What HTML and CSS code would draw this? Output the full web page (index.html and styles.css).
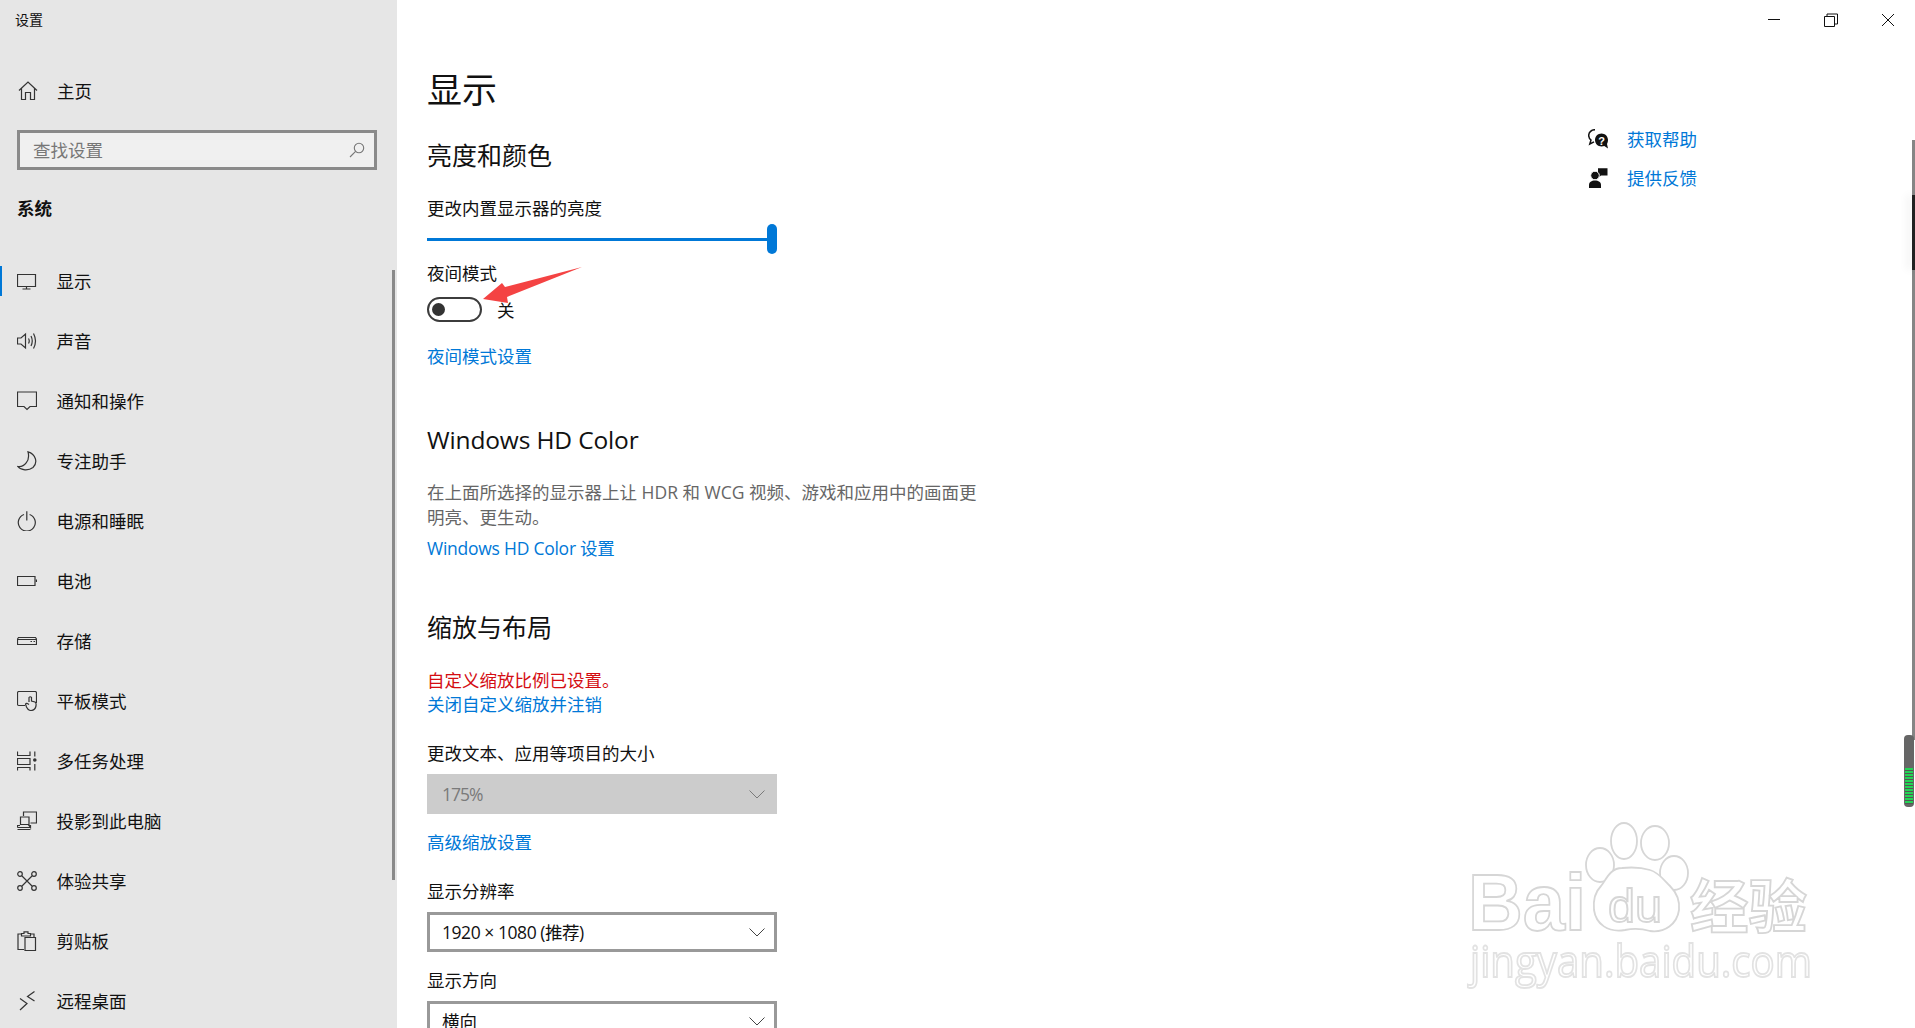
FILE: index.html
```html
<!DOCTYPE html>
<html lang="zh-CN">
<head>
    <meta charset="UTF-8">
    <title>设置</title>
    <link rel="stylesheet" href="styles.css">
</head>
<body>
    <div class="window">
        <!-- Sidebar -->
        <aside class="sidebar">
            <div class="app-title">设置</div>
            <div class="home-row">
                <svg class="icon" viewBox="0 0 20 20"><path d="M1 9.500 10 1l9 8.500M3.500 7.500V18.500H7.500V11.500H12.500V18.500H16.500V7.500"/></svg>
                <span>主页</span>
            </div>
            <div class="search-box">
                <span>查找设置</span>
                <svg class="search-icon" viewBox="0 0 16 16"><circle cx="10" cy="6" r="4.700"/><path d="M6.600 9.400 1 15"/></svg>
            </div>
            <div class="group-title">系统</div>
            <nav class="nav-list">
                <div class="nav-item active">
                    <svg class="icon" viewBox="0 0 20 20"><path d="M.5 3.500H18.500V15.500H.5zM9.500 15.500V18M5.500 18H13.500"/></svg>
                    <span>显示</span>
                </div>
                <div class="nav-item">
                    <svg class="icon" viewBox="0 0 20 20"><path d="M.5 7H4L8.500 3V17L4 13H.5zM11.500 7.500Q13 10 11.500 12.500M14 5Q16.500 10 14 15M16.500 2.500Q20.500 10 16.500 17.500"/></svg>
                    <span>声音</span>
                </div>
                <div class="nav-item">
                    <svg class="icon" viewBox="0 0 20 20"><path d="M.5 1H19.500V15.500H13L10 18.500 7 15.500H.5z"/></svg>
                    <span>通知和操作</span>
                </div>
                <div class="nav-item">
                    <svg class="icon" viewBox="0 0 20 20"><path d="M11 .8C19 3 21 12 16 16.500 11.500 20 4 19.500.8 15.500 7 16.500 13.500 10 11 .8z"/></svg>
                    <span>专注助手</span>
                </div>
                <div class="nav-item">
                    <svg class="icon" viewBox="0 0 20 20"><path d="M7 3.500A8.500 8.500 0 1 0 12.600 3.500M9.800 .2V9.500"/></svg>
                    <span>电源和睡眠</span>
                </div>
                <div class="nav-item">
                    <svg class="icon" viewBox="0 0 20 20"><path d="M.5 5.500H18V14.500H.5zM19.500 8.500V11"/></svg>
                    <span>电池</span>
                </div>
                <div class="nav-item">
                    <svg class="icon" viewBox="0 0 20 20"><path d="M1.500 6.500H18.500L19.500 8V13.500H.5V8zM.5 8.500H19.500M13.500 10.500H15M16.500 10.500H18"/></svg>
                    <span>存储</span>
                </div>
                <div class="nav-item">
                    <svg class="icon" viewBox="0 0 20 20"><path d="M8 14.500H2Q.5 14.500.5 13V2Q.5.5 2 .5H18Q19.500.5 19.500 2V12M12 11V6.500Q13.200 5 14.500 6.500V10L18 11Q19.500 12 19 15 18 19.500 14 19.500 11 19.500 9.500 16L8.500 13Q9.500 11.500 12 13.500"/></svg>
                    <span>平板模式</span>
                </div>
                <div class="nav-item">
                    <svg class="icon" viewBox="0 0 20 20"><path d="M.5 .5V4.500H13V.5M.5 7.500H13V13.500H.5zM.5 19.500V16.500H13V19.500M17.800 .5V5.500M17.800 13V19.500"/><circle class="solid" cx="17.800" cy="9" r="1.800"/></svg>
                    <span>多任务处理</span>
                </div>
                <div class="nav-item">
                    <svg class="icon" viewBox="0 0 20 20"><path d="M6.500 5V1H19.500V12H13.500M3.500 6H12V13.500H3.500zM.5 16.500V14.500H3M12 14.500H13.500V16.500zM.5 16.500H13.500M.5 18.500H13.500"/></svg>
                    <span>投影到此电脑</span>
                </div>
                <div class="nav-item">
                    <svg class="icon" viewBox="0 0 20 20"><circle cx="3" cy="3" r="2.300"/><circle cx="17" cy="3" r="2.300"/><circle cx="3" cy="17" r="2.300"/><circle cx="17" cy="17" r="2.300"/><path d="M5 5 15 15M15 5 5 15"/></svg>
                    <span>体验共享</span>
                </div>
                <div class="nav-item">
                    <svg class="icon" viewBox="0 0 20 20"><path d="M7 18.500H1V3H5M13 3H17V6M4.500 4.500V2.500H7V.8H11V2.500H13.500V5H4.500zM8 6.500H18.500V19.500H8z"/></svg>
                    <span>剪贴板</span>
                </div>
                <div class="nav-item">
                    <svg class="icon" viewBox="0 0 20 20"><path d="M3 7.500 10 12.500 3 19M17.500 .5 10.500 5.500 17.500 10"/></svg>
                    <span>远程桌面</span>
                </div>
            </nav>
            <div class="side-scroll"></div>
        </aside>

        <!-- Main area -->
        <main class="main">
            <div class="title-bar">
                <div class="win-btn"><svg viewBox="0 0 14 14"><path d="M1 6.500H13"/></svg></div>
                <div class="win-btn"><svg viewBox="0 0 14 14"><path d="M.5 3.500H10.500V13.500H.5zM3 3.500V1H13.500V11H10.500"/></svg></div>
                <div class="win-btn"><svg viewBox="0 0 14 14"><path d="M1 1 13 13M13 1 1 13"/></svg></div>
            </div>
            <div class="main-body">
                <section class="content">
                    <h1>显示</h1>
                    <h2 class="h-brightness">亮度和颜色</h2>
                    <div class="label l-brightness">更改内置显示器的亮度</div>
                    <div class="slider"><div class="slider-thumb"></div></div>
                    <div class="label l-night">夜间模式</div>
                    <div class="toggle-row">
                        <div class="toggle"><div class="toggle-knob"></div></div>
                        <span>关</span>
                    </div>
                    <a class="link l-nightlink">夜间模式设置</a>

                    <h2 class="h-hd">Windows HD Color</h2>
                    <p class="desc">在上面所选择的显示器上让 HDR 和 WCG 视频、游戏和应用中的画面更明亮、更生动。</p>
                    <a class="link l-hdlink">Windows HD Color 设置</a>

                    <h2 class="h-scale">缩放与布局</h2>
                    <div class="label warn">自定义缩放比例已设置。</div>
                    <a class="link l-off">关闭自定义缩放并注销</a>
                    <div class="label l-size">更改文本、应用等项目的大小</div>
                    <div class="select disabled">
                        <span>175%</span>
                        <svg class="chevron" viewBox="0 0 16 9"><path d="M.5 .5 8 8 15.500 .5"/></svg>
                    </div>
                    <a class="link l-adv">高级缩放设置</a>
                    <div class="label l-res">显示分辨率</div>
                    <div class="select s-res">
                        <span>1920 × 1080 (推荐)</span>
                        <svg class="chevron" viewBox="0 0 16 9"><path d="M.5 .5 8 8 15.500 .5"/></svg>
                    </div>
                    <div class="label l-orient">显示方向</div>
                    <div class="select s-orient">
                        <span>横向</span>
                        <svg class="chevron" viewBox="0 0 16 9"><path d="M.5 .5 8 8 15.500 .5"/></svg>
                    </div>
                </section>
                <section class="help">
                    <div class="help-row">
                        <svg class="help-icon" viewBox="0 0 20 20">
                            <path class="outline" d="M7 .7C3.500 .7.7 3.200.7 6.500.7 8.500 1.700 10 3 11L1.800 15 6 12.800"/>
                            <path class="fill" d="M13.500 4.500C10 4.500 7 7.300 7 11S10 17.500 13.500 17.500C14.500 17.500 15.500 17.300 16.300 17L20 19.500 19 15C19.700 13.800 20 12.500 20 11 20 7.300 17 4.500 13.500 4.500z"/>
                            <text class="help-q" x="13.500" y="15.500">?</text>
                        </svg>
                        <a class="link">获取帮助</a>
                    </div>
                    <div class="help-row">
                        <svg class="help-icon" viewBox="0 0 20 20">
                            <path class="fill" d="M10 .2H19.500V7.500H13L10.500 9.500V5.500H10z"/>
                            <circle class="fill head" cx="7" cy="7.500" r="4.300"/>
                            <path class="fill" d="M1 20V17C1 14 3.500 12.500 7 12.500S13 14 13 17V20z"/>
                        </svg>
                        <a class="link">提供反馈</a>
                    </div>
                </section>
            </div>
        </main>
    </div>

    <!-- Annotation arrow pasted on the screenshot -->
    <svg class="arrow" viewBox="0 0 110 44"><polygon points="1,38 20,22 23,26 100,6 25,36 26,42"/></svg>

    <!-- Watermark -->
    <svg class="watermark" viewBox="0 0 380 190">
        <text class="wm-big" x="8" y="110" textLength="118" lengthAdjust="spacingAndGlyphs">Bai</text>
        <ellipse cx="140" cy="45" rx="14" ry="17"/>
        <ellipse cx="164" cy="21" rx="13" ry="18"/>
        <ellipse cx="195" cy="23" rx="14" ry="17"/>
        <ellipse cx="214" cy="53" rx="14" ry="17"/>
        <path d="M162 48C150 48 146 60 141 66 135 72 133 80 134 90 136 104 148 113 165 110 174 108 180 108 190 111 205 113 217 104 219 90 220 80 216 72 210 66 204 60 198 52 190 50 180 47 172 47 162 48z"/>
        <text class="wm-du" x="148" y="102" textLength="54" lengthAdjust="spacingAndGlyphs">du</text>
        <text class="wm-cn" x="230" y="108" textLength="117" lengthAdjust="spacingAndGlyphs">经验</text>
        <text class="wm-url" x="10" y="157" textLength="342" lengthAdjust="spacingAndGlyphs">jingyan.baidu.com</text>
    </svg>

    <!-- Right edge scrollbar and desktop widget -->
    <div class="page-scroll"><div class="page-scroll-dark"></div></div>
    <div class="widget"><div class="widget-bars"></div></div>
</body>
</html>
```

FILE: styles.css
```css
* {
    box-sizing: border-box;
}

html, body {
    margin: 0;
    padding: 0;
    height: 1028px;
    overflow: hidden;
}

body {
    position: relative;
    font-family: "Open Sans", "Noto Sans CJK SC", sans-serif;
    font-size: 17.5px;
    line-height: 24px;
    color: #111;
    background-color: #fff;
}

.window {
    display: flex;
    height: 1028px;
}

/* Sidebar */
.sidebar {
    position: relative;
    flex: 0 0 397px;
    background-color: #e6e6e6;
    overflow: hidden;
}

.app-title {
    height: 40px;
    padding-left: 15px;
    font-size: 14px;
    line-height: 40px;
}

.home-row {
    display: flex;
    align-items: center;
    height: 30px;
    margin-top: 36px;
    padding-left: 18px;
}

.home-row span {
    margin-left: 19px;
}

.icon {
    flex: 0 0 20px;
    width: 20px;
    height: 20px;
    fill: none;
    stroke: #333;
    stroke-width: 1.2;
}

.icon .solid {
    fill: #333;
    stroke: none;
}

.search-box {
    display: flex;
    align-items: center;
    justify-content: space-between;
    width: 360px;
    height: 40px;
    margin: 24px 0 0 17px;
    padding: 0 9px 0 13px;
    border: 3px solid #8a8a8a;
    background-color: #f0f0f0;
    color: #777;
}

.search-icon {
    width: 16px;
    height: 16px;
    fill: none;
    stroke: #777;
    stroke-width: 1.1;
}

.group-title {
    margin: 26px 0 0 17px;
    font-weight: 700;
}

.nav-list {
    margin-top: 31px;
}

.nav-item {
    display: flex;
    align-items: center;
    height: 60px;
    padding-left: 17px;
}

.nav-item span {
    margin-left: 19.5px;
}

.nav-item.active {
    position: relative;
}

.nav-item.active::before {
    content: "";
    position: absolute;
    left: 0;
    top: 15px;
    width: 2px;
    height: 30px;
    background-color: #0078d7;
}

.side-scroll {
    position: absolute;
    left: 392px;
    top: 270px;
    width: 3px;
    height: 610px;
    background-color: #8a8a8a;
}

/* Main area */
.main {
    flex: 1;
    display: flex;
    flex-direction: column;
    overflow: hidden;
}

.title-bar {
    display: flex;
    justify-content: flex-end;
    height: 40px;
}

.win-btn {
    display: flex;
    align-items: center;
    justify-content: center;
    width: 57px;
    height: 40px;
}

.win-btn svg {
    width: 14px;
    height: 14px;
    margin-left: 2px;
    fill: none;
    stroke: #111;
    stroke-width: 1;
}

.main-body {
    flex: 1;
    display: flex;
    min-height: 0;
}

.content {
    flex: 1;
    padding-left: 30px;
}

h1 {
    margin: 25px 0 0;
    font-size: 35px;
    font-weight: 400;
    line-height: 50px;
}

h2 {
    font-size: 25px;
    font-weight: 400;
    line-height: 34px;
    margin: 0;
}

.label, .link {
    display: block;
    height: 24px;
}

.link {
    color: #0078d7;
}

.h-brightness { margin-top: 23px; }
.l-brightness { margin-top: 24px; }
.l-night { margin-top: 7px; }
.l-nightlink { margin-top: 22px; }
.h-hd { margin-top: 55px; font-size: 24.5px; letter-spacing: -0.15px; }
.l-hdlink { margin-top: 6px; letter-spacing: -0.25px; }
.h-scale { margin-top: 50px; }
.warn { margin-top: 24px; color: #d40d12; }
.l-off { margin-top: 0; }
.l-size { margin-top: 25px; }
.l-adv { margin-top: 16px; }
.l-res { margin-top: 25px; }
.s-res { margin-top: 7px; letter-spacing: -0.45px; }
.l-orient { margin-top: 16px; }
.s-orient { margin-top: 9px; }

.slider {
    position: relative;
    width: 350px;
    height: 30px;
    margin-top: 4px;
}

.slider::before {
    content: "";
    position: absolute;
    left: 0;
    top: 14px;
    width: 345px;
    height: 3px;
    background-color: #0078d7;
}

.slider-thumb {
    position: absolute;
    right: 0;
    top: 0;
    width: 10px;
    height: 30px;
    border-radius: 5px;
    background-color: #0078d7;
}

.toggle-row {
    display: flex;
    align-items: center;
    height: 25px;
    margin-top: 12px;
}

.toggle-row span {
    margin-left: 15px;
}

.toggle {
    display: flex;
    align-items: center;
    width: 55px;
    height: 25px;
    padding-left: 3px;
    border: 2.5px solid #3c3c3c;
    border-radius: 13px;
}

.toggle-knob {
    width: 13px;
    height: 13px;
    border-radius: 50%;
    background-color: #333;
}

.desc {
    width: 552px;
    margin: 23px 0 0;
    line-height: 25px;
    color: #666;
}

.select {
    display: flex;
    align-items: center;
    justify-content: space-between;
    width: 350px;
    height: 40px;
    margin-top: 9px;
    padding: 0 9px 0 12px;
    border: 3px solid #999;
    background-color: #fff;
}

.select.disabled {
    border-color: #ccc;
    background-color: #ccc;
    color: #7a7a7a;
    letter-spacing: -1px;
}

.chevron {
    width: 16px;
    height: 9px;
    fill: none;
    stroke: #444;
    stroke-width: 1;
}

.disabled .chevron {
    stroke: #7a7a7a;
}

/* Help links */
.help {
    flex: 0 0 327px;
    padding-top: 79px;
}

.help-row {
    display: flex;
    align-items: center;
    height: 39px;
}

.help-row .link {
    margin-left: 19px;
}

.help-icon {
    flex: 0 0 20px;
    width: 20px;
    height: 20px;
}

.help-icon .outline {
    fill: none;
    stroke: #111;
    stroke-width: 1.5;
}

.help-icon .fill {
    fill: #111;
}

.help-icon .head {
    stroke: #fff;
    stroke-width: 1;
}

.help-q {
    fill: #fff;
    font-family: "Liberation Sans", sans-serif;
    font-size: 11px;
    font-weight: 700;
    text-anchor: middle;
}

/* Overlays */
.arrow {
    position: absolute;
    left: 482px;
    top: 261px;
    width: 110px;
    height: 44px;
}

.arrow polygon {
    fill: #f44343;
}

.watermark {
    position: absolute;
    left: 1460px;
    top: 820px;
    width: 380px;
    height: 190px;
    fill: #fff;
    stroke: #d6d6d6;
    stroke-width: 1.8;
    filter: blur(0.6px);
}

.wm-big {
    font-family: "Liberation Sans", sans-serif;
    font-size: 80px;
    font-weight: 700;
}

.wm-du {
    font-family: "Liberation Sans", sans-serif;
    font-size: 46px;
}

.wm-cn {
    font-family: "Noto Sans CJK SC", sans-serif;
    font-size: 58px;
    font-weight: 700;
}

.wm-url {
    font-family: "Open Sans", sans-serif;
    font-size: 44px;
    stroke: #e2e2e2;
}

.page-scroll {
    position: absolute;
    left: 1912px;
    top: 140px;
    width: 3px;
    height: 600px;
    background-color: #858585;
}

.page-scroll-dark {
    position: absolute;
    left: 0;
    top: 55px;
    width: 3px;
    height: 75px;
    background-color: #222;
    box-shadow: -4px 0 8px rgba(0, 0, 0, 0.1);
}

.widget {
    position: absolute;
    left: 1904px;
    top: 735px;
    width: 10px;
    height: 72px;
    padding: 33px 1px 0;
    border-radius: 4px;
    background-color: #666;
}

.widget-bars {
    height: 36px;
    background: repeating-linear-gradient(to bottom, #22d455 0, #22d455 2px, #555 2px, #555 3px);
}
```
